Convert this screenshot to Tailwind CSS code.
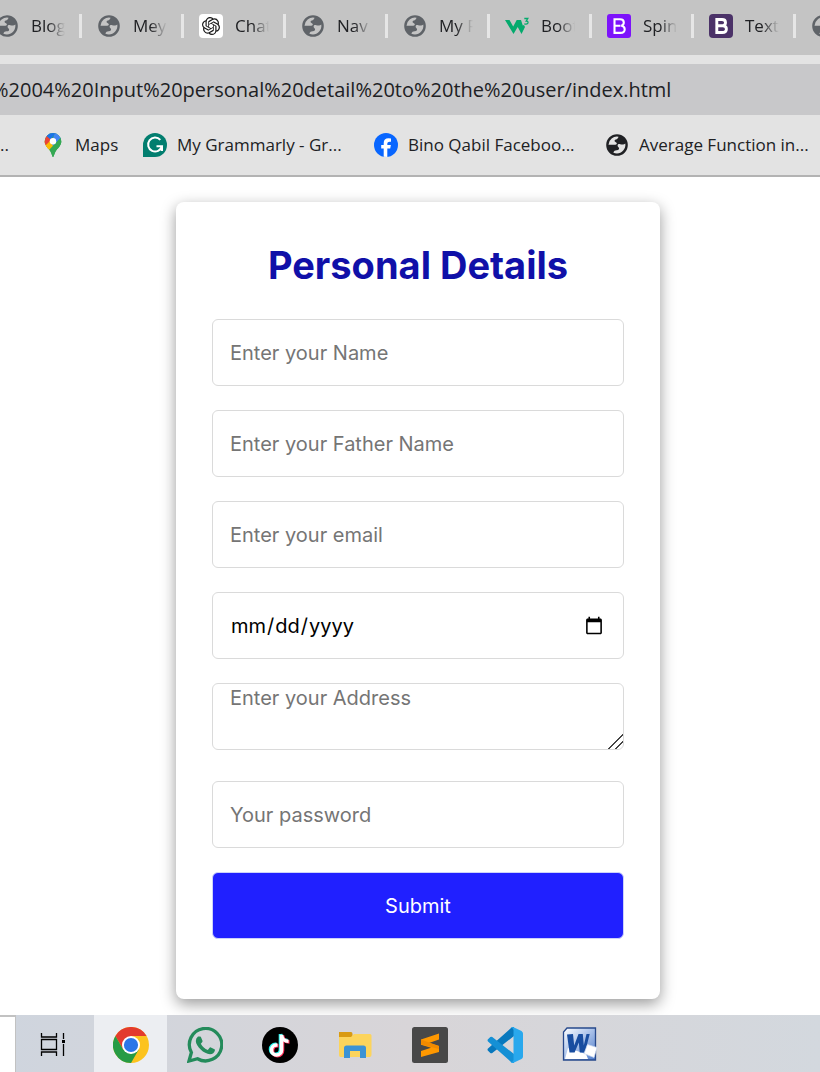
<!DOCTYPE html>
<html lang="en">
<head>
<meta charset="utf-8">
<meta name="viewport" content="width=device-width, initial-scale=1">
<title>Personal Details</title>
<script src="https://cdn.jsdelivr.net/npm/@tailwindcss/browser@4"></script>
</head>
<body class="flex min-h-screen flex-col overflow-x-hidden bg-white font-['Open_Sans','Noto_Sans',sans-serif] text-[#202124]">
<svg class="hidden" aria-hidden="true">
  <symbol id="globe" viewBox="0 0 24 24">
    <path fill="currentColor" fill-rule="evenodd" d="M12 1.200a10.800 10.800 0 1 0 0 21.600 10.800 10.800 0 0 0 0-21.600zM13.500 3.700c-.3 1.700-1.300 2.300-2.700 2.800-1.700.6-1.500 2-.3 2.500 1.800.7 1.900 2.400-.1 2.700-2 .3-4.500.1-6.900.1A8.500 8.500 0 0 1 13.500 3.700zM20.300 10.500c.8 5.500-3.600 10-8.300 10-1.300 0-2.600-.3-3.600-.8.600-1.700 1.700-2.500 3.400-2.400 1.800 0 2.600-1 2.200-2.200-.5-1.300-1.500-1.200-1.400-2.600.1-1.300 1.300-1.600 2.600-1.300 2 .5 3.500.8 5.100-.7z"/>
  </symbol>
</svg>

<header>
  <nav aria-label="Tabs" class="flex h-[55px] overflow-hidden bg-[#c4c4c4] text-[17px]">
    <div class="-ml-[23px] flex h-[52px] shrink-0">
      <a href="#" class="flex w-[102px] shrink-0 items-center"><i class="h-6 w-[3px] bg-[#e6e6e6]"></i><svg class="ml-[15px] size-6 text-[#5f6368]"><use href="#globe"/></svg><span class="ml-3 w-[34px] overflow-hidden whitespace-nowrap mask-r-from-50%">Blog</span></a>
      <a href="#" class="flex w-[102px] shrink-0 items-center"><i class="h-6 w-[3px] bg-[#e6e6e6]"></i><svg class="ml-[15px] size-6 text-[#5f6368]"><use href="#globe"/></svg><span class="ml-3 w-[34px] overflow-hidden whitespace-nowrap mask-r-from-50%">Mey</span></a>
      <a href="#" class="flex w-[102px] shrink-0 items-center"><i class="h-6 w-[3px] bg-[#e6e6e6]"></i>
        <svg class="ml-[15px] size-6" viewBox="0 0 24 24"><rect width="24" height="24" rx="4" fill="#fff"/><path transform="translate(3 3) scale(.75)" fill="#1a1a1a" d="M22.2819 9.8211a5.9847 5.9847 0 0 0-.5157-4.9108 6.0462 6.0462 0 0 0-6.5098-2.9A6.0651 6.0651 0 0 0 4.9807 4.1818a5.9847 5.9847 0 0 0-3.9977 2.9 6.0462 6.0462 0 0 0 .7427 7.0966 5.98 5.98 0 0 0 .511 4.9107 6.051 6.051 0 0 0 6.5146 2.9001A5.9847 5.9847 0 0 0 13.2599 24a6.0557 6.0557 0 0 0 5.7718-4.2058 5.9894 5.9894 0 0 0 3.9977-2.9001 6.0557 6.0557 0 0 0-.7475-7.0729zm-9.022 12.6081a4.4755 4.4755 0 0 1-2.8764-1.0408l.1419-.0804 4.7783-2.7582a.7948.7948 0 0 0 .3927-.6813v-6.7369l2.02 1.1686a.071.071 0 0 1 .038.052v5.5826a4.504 4.504 0 0 1-4.4945 4.4944zm-9.6607-4.1254a4.4708 4.4708 0 0 1-.5346-3.0137l.142.0852 4.783 2.7582a.7712.7712 0 0 0 .7806 0l5.8428-3.3685v2.3324a.0804.0804 0 0 1-.0332.0615L9.74 19.9502a4.4992 4.4992 0 0 1-6.1408-1.6464zM2.3408 7.8956a4.485 4.485 0 0 1 2.3655-1.9728V11.6a.7664.7664 0 0 0 .3879.6765l5.8144 3.3543-2.0201 1.1685a.0757.0757 0 0 1-.071 0l-4.8303-2.7865A4.504 4.504 0 0 1 2.3408 7.872zm16.5963 3.8558L13.1038 8.364 15.1192 7.2a.0757.0757 0 0 1 .071 0l4.8303 2.7913a4.4944 4.4944 0 0 1-.6765 8.1042v-5.6772a.79.79 0 0 0-.407-.667zm2.0107-3.0231l-.142-.0852-4.7735-2.7818a.7759.7759 0 0 0-.7854 0L9.409 9.2297V6.8974a.0662.0662 0 0 1 .0284-.0615l4.8303-2.7866a4.4992 4.4992 0 0 1 6.6802 4.66zM8.3065 12.863l-2.02-1.1638a.0804.0804 0 0 1-.038-.0567V6.0742a4.4992 4.4992 0 0 1 7.3757-3.4537l-.142.0805L8.704 5.459a.7948.7948 0 0 0-.3927.6813zm1.0976-2.3654l2.602-1.4998 2.6069 1.4998v2.9994l-2.5974 1.4997-2.6067-1.4997Z"/></svg>
        <span class="ml-3 w-[34px] overflow-hidden whitespace-nowrap mask-r-from-50%">Chat</span></a>
      <a href="#" class="flex w-[102px] shrink-0 items-center"><i class="h-6 w-[3px] bg-[#e6e6e6]"></i><svg class="ml-[15px] size-6 text-[#5f6368]"><use href="#globe"/></svg><span class="ml-3 w-[34px] overflow-hidden whitespace-nowrap mask-r-from-50%">Nav</span></a>
      <a href="#" class="flex w-[102px] shrink-0 items-center"><i class="h-6 w-[3px] bg-[#e6e6e6]"></i><svg class="ml-[15px] size-6 text-[#5f6368]"><use href="#globe"/></svg><span class="ml-3 w-[34px] overflow-hidden whitespace-nowrap mask-r-from-50%">My F</span></a>
      <a href="#" class="flex w-[102px] shrink-0 items-center"><i class="h-6 w-[3px] bg-[#e6e6e6]"></i>
        <svg class="ml-[15px] size-6" viewBox="0 0 24 24"><path d="M0 6h4.500l3.700 6.500L11.700 6H16l1.800 5.500L19 11l1 2-3.500 7-3.800-7-4.200 7z" fill="#04aa6d"/><path d="M19.300 4.500h3.500L21.200 7q2 0 1.800 1.700-.4 2-3.700 1.100" fill="none" stroke="#04aa6d" stroke-width="1.300"/></svg>
        <span class="ml-3 w-[34px] overflow-hidden whitespace-nowrap mask-r-from-50%">Boot</span></a>
      <a href="#" class="flex w-[102px] shrink-0 items-center"><i class="h-6 w-[3px] bg-[#e6e6e6]"></i>
        <svg class="ml-[15px] size-6" viewBox="0 0 24 24"><rect width="24" height="24" rx="3" fill="#7d12fb"/><path d="M7.500 5.300h5.600q3.700 0 3.700 3.200 0 2.500-2.500 3.200 3.400.4 3.400 3.500 0 3.700-4.300 3.700H7.500zM7.500 11.700h6" fill="none" stroke="#fff" stroke-width="2.100"/></svg>
        <span class="ml-3 w-[34px] overflow-hidden whitespace-nowrap mask-r-from-50%">Spin</span></a>
      <a href="#" class="flex w-[102px] shrink-0 items-center"><i class="h-6 w-[3px] bg-[#e6e6e6]"></i>
        <svg class="ml-[15px] size-6" viewBox="0 0 24 24"><rect width="24" height="24" rx="4" fill="#4b3268"/><path d="M7.800 5.500h5.200q3.500 0 3.500 3 0 2.500-2.500 3.200 3.400.4 3.400 3.300 0 3.500-4.200 3.500H7.800zM7.800 11.700h6" fill="none" stroke="#fff" stroke-width="2.900"/></svg>
        <span class="ml-3 w-[34px] overflow-hidden whitespace-nowrap mask-r-from-50%">Text</span></a>
      <a href="#" aria-label="Tab" class="flex w-[102px] shrink-0 items-center"><i class="h-6 w-[3px] bg-[#e6e6e6]"></i><svg class="ml-[15px] size-6 text-[#5f6368]"><use href="#globe"/></svg></a>
    </div>
  </nav>
  <div class="bg-[#e3e3e3] pt-[9px]">
    <div class="flex h-[51px] items-center justify-start overflow-hidden bg-[#c8c8ca] text-xl whitespace-nowrap">
      <span class="-ml-2">%2004%20Input%20personal%20detail%20to%20the%20user/index.html</span>
    </div>
  </div>
  <nav aria-label="Bookmarks" class="flex h-[62px] items-center overflow-hidden border-b-2 border-[#b3b3b3] bg-[#e3e3e3] text-[17px] whitespace-nowrap">
    <a href="#" class="w-[41px] shrink-0">..</a>
    <a href="#" class="flex w-[102px] shrink-0 items-center gap-[10px]">
      <svg class="size-6" viewBox="0 0 24 24"><defs><clipPath id="pin"><path d="M12 0a8.300 8.300 0 0 1 8.300 8.300c0 4-2.700 6.200-4.800 8.800-1.500 2-1.900 4-3 6.500q-.5.900-1 0c-1-2.500-1.400-4.500-3-6.500-2.100-2.600-4.800-4.800-4.800-8.800A8.300 8.300 0 0 1 12 0z"/></clipPath></defs><g clip-path="url(#pin)"><path fill="#34a853" d="M0 0h24v24H0z"/><path fill="#fbbc04" d="M3 8l6-2 7 4-9 9-5-6z"/><path fill="#ea4335" d="M3 0l9 6-6.500 7.500L2 9z"/><path fill="#fbbc04" d="M3 14l6-6 3.500 3.500-6 7z"/><path fill="#1a73e8" d="M5 2.500l4.500 4L15 0H6z"/><path fill="#4285f4" d="M14 0h5l2 5-8 9-3-4z"/><path fill="#34a853" d="M19.700 4.500L24 9l-9 14-5 2-2-8z"/></g><circle cx="12" cy="8.300" r="3.200" fill="#fff"/></svg>
      <span>Maps</span></a>
    <a href="#" class="flex w-[231px] shrink-0 items-center gap-[10px]">
      <svg class="size-6" viewBox="0 0 24 24"><path d="M12 0a12 12 0 1 1 0 24H0V12A12 12 0 0 1 12 0z" fill="#027e6f"/><path d="M17.300 6.800a7 7 0 1 0 1.600 6.400h-5.400M19 18v-4.800" fill="none" stroke="#fff" stroke-width="2"/></svg>
      <span>My Grammarly - Gr...</span></a>
    <a href="#" class="flex w-[231px] shrink-0 items-center gap-[10px]">
      <svg class="size-6" viewBox="0 0 24 24"><circle cx="12" cy="12" r="12" fill="#0866ff"/><path d="M9.700 23.800V15.500H7.200v-3.600h2.500v-1.600q0-5 4.800-5 1.200 0 2.500.3v3.100h-1.400q-2.300 0-2.300 1.900v1.300h3.600l-.7 3.600h-2.900v8.400z" fill="#fff"/></svg>
      <span>Bino Qabil Faceboo...</span></a>
    <a href="#" class="flex shrink-0 items-center gap-[10px]">
      <svg class="size-6"><use href="#globe"/></svg>
      <span>Average Function in...</span></a>
  </nav>
</header>

<main class="flex flex-1 justify-center px-4 pt-[25px] pb-4 font-[Inter,sans-serif]">
  <form class="ml-4 w-full max-w-[484px] rounded-lg bg-white px-9 pt-9 pb-[60px] text-xl text-black shadow-[0_5px_15px_rgba(0,0,0,0.4)]">
    <h1 class="mb-[27px] text-center text-[38px] leading-[54px] font-bold text-[#1010a8]">Personal Details</h1>
    <div class="flex flex-col gap-6">
      <input type="text" aria-label="Name" placeholder="Enter your Name" class="h-[67px] w-full rounded-md border border-[#dadada] px-[17px] placeholder:text-[#757575]">
      <input type="text" aria-label="Father Name" placeholder="Enter your Father Name" class="h-[67px] w-full rounded-md border border-[#dadada] px-[17px] placeholder:text-[#757575]">
      <input type="email" aria-label="Email" placeholder="Enter your email" class="h-[67px] w-full rounded-md border border-[#dadada] px-[17px] placeholder:text-[#757575]">
      <input type="date" aria-label="Date of birth" class="h-[67px] w-full rounded-md border border-[#dadada] px-[17px]">
      <textarea aria-label="Address" placeholder="Enter your Address" class="mb-[7px] block h-[67px] w-full resize rounded-md border border-[#dadada] px-[17px] leading-7 placeholder:text-[#757575] [&::-webkit-resizer]:bg-[linear-gradient(135deg,transparent_48%,#444_48%,#444_56%,transparent_56%,transparent_72%,#444_72%,#444_80%,transparent_80%)]"></textarea>
      <input type="password" aria-label="Password" placeholder="Your password" class="h-[67px] w-full rounded-md border border-[#dadada] px-[17px] placeholder:text-[#757575]">
      <button type="submit" class="h-[67px] w-full rounded-md border border-[#ccd2fa] bg-[#2020ff] text-white">Submit</button>
    </div>
  </form>
</main>

<footer class="flex h-[57px] overflow-hidden bg-linear-to-r from-[#cfd5de] via-[#d8d5d8] to-[#d3d8de]">
  <div class="w-4 shrink-0 border-t-2 border-r border-[#c2c2c2] bg-white"></div>
  <button type="button" aria-label="Task view" class="flex w-[78px] shrink-0 items-center justify-center">
    <svg class="-ml-1 size-9" viewBox="0 0 36 36" fill="none" stroke="#000" stroke-width="1.300"><path d="M6.500 7v4h15V7M6.500 30v-4h15v4M6.500 13.500h15v10h-15zM28.500 7v6M28.500 18v12"/><path d="M27 14h3v3h-3z" fill="#000" stroke="none"/></svg>
  </button>
  <button type="button" aria-label="Chrome" class="flex w-[73px] shrink-0 items-center justify-center bg-[#eceef2]">
    <svg class="mt-[3px] size-9" viewBox="0 0 36 36"><circle cx="18" cy="18" r="18" fill="#fcc31e"/><path d="M2.400 9A18 18 0 0 1 33.600 9H18l-7.800 13.500z" fill="#e33b2e"/><path d="M2.400 9A18 18 0 0 0 18 36l7.800-13.500-7.800 4.500-7.800-4.500z" fill="#269b45"/><circle cx="18" cy="18" r="9" fill="#fff"/><circle cx="18" cy="18" r="7.100" fill="#2b76e8"/></svg>
  </button>
  <button type="button" aria-label="WhatsApp" class="flex w-[75px] shrink-0 items-center justify-center">
    <svg class="mt-[3px] size-9" viewBox="0 0 36 36"><path d="M2 34l2.400-8.500A16.200 16.200 0 1 1 10.500 31.700z" fill="none" stroke="#248b5b" stroke-width="3.300"/><path d="M11 9.500h2.100q.7.100 1 1l1.400 3.300q.2.600-.2 1.100l-1.500 1.900q2.500 4.500 7 6.200l2-2.400q.4-.5 1.100-.2l3.600 1.800q.7.400.4 1.400-.9 3.700-4.900 3.700C17 27 9 19.500 8.800 14q0-3 2.200-4.500z" fill="#248b5b"/></svg>
  </button>
  <button type="button" aria-label="TikTok" class="flex w-[75px] shrink-0 items-center justify-center">
    <svg class="mt-[3px] size-9" viewBox="0 0 36 36"><circle cx="18" cy="18" r="18" fill="#000"/><g fill="none" stroke-width="3.600"><path d="M19.500 7v15.200a5 5 0 1 1-5-5h1M19.500 7c.3 4 3 6.500 7 6.500" stroke="#25f4ee" transform="translate(-1 0)"/><path d="M19.500 7v15.200a5 5 0 1 1-5-5h1M19.500 7c.3 4 3 6.500 7 6.500" stroke="#fe2c55" transform="translate(1 1.500)"/><path d="M19.500 7v15.200a5 5 0 1 1-5-5h1M19.500 7c.3 4 3 6.500 7 6.500" stroke="#fff" transform="translate(0 .8)"/></g></svg>
  </button>
  <button type="button" aria-label="File Explorer" class="flex w-[75px] shrink-0 items-center justify-center">
    <svg class="mt-[3px] size-9" viewBox="0 0 36 36"><path d="M2 5h12q1.500 0 1.500 2v4H2z" fill="#d99a12"/><path d="M2 10h12l3-3h16q1.500 0 1.500 1.500V28q0 2-2 2H3.500Q2 30 2 28z" fill="#fcd45c"/><path d="M7 31V21q0-2.500 2.500-2.500h17Q29 18.500 29 21v10h-6v-7H13v7z" fill="#3c93d5"/></svg>
  </button>
  <button type="button" aria-label="Sublime Text" class="flex w-[75px] shrink-0 items-center justify-center">
    <svg class="mt-[3px] size-9" viewBox="0 0 36 36"><rect width="36" height="36" rx="2.500" fill="#484848"/><path d="M9 12.500l18-6v6l-10 3.500 10 3v6l-18 5v-6l10-3.300-10-3z" fill="#ff9800"/><path d="M9 12.500l18 6.500v3L9 17.500z" fill="#f18a00"/></svg>
  </button>
  <button type="button" aria-label="Visual Studio Code" class="flex w-[75px] shrink-0 items-center justify-center">
    <svg class="mt-[3px] size-9" viewBox="0 0 36 36"><path d="M1 21.500q-1 1.200 0 2.200l2.300 2.200q1 .8 2 0L27 9V0q-1.500-.5-3 1z" fill="#0878bd"/><path d="M1 14.500q-1-1.200 0-2.200l2.300-2.200q1-.8 2 0L27 27v9q-1.500.5-3-1z" fill="#1590d5"/><path d="M26 0l8.500 4Q36 5 36 6.500v23q0 1.500-1.500 2.500l-8.500 4q-1.500 0-2.500-1.200 3 .7 3-2V3.200q0-2.700-3-2Q24.500 0 26 0z" fill="#29a8ed"/></svg>
  </button>
  <button type="button" aria-label="Word" class="flex w-[75px] shrink-0 items-center justify-center">
    <svg class="size-9" viewBox="0 0 36 36"><defs><linearGradient id="doc" x2="1" y2="1"><stop stop-color="#fff"/><stop offset=".4" stop-color="#b9cdee"/><stop offset="1" stop-color="#4c7aca"/></linearGradient></defs><path d="M5 2h28.500v32H1.500V6z" fill="url(#doc)" stroke="#27498c" stroke-width="1.300"/><path d="M3 33l3-11 18 6 2 5z" fill="#fff"/><path d="M5 8.500L11 8l1.200 11.500L16.500 8h4.300l1 11.500L24.500 8h3.200L23 26.500h-5.200l-1-10-4.200 10H7.500z" fill="#184da0"/><path d="M25.500 18.500l9.500 3-3 10-10-4z" fill="#fff" stroke="#cbd8ef" stroke-width=".7"/></svg>
  </button>
</footer>
</body>
</html>
